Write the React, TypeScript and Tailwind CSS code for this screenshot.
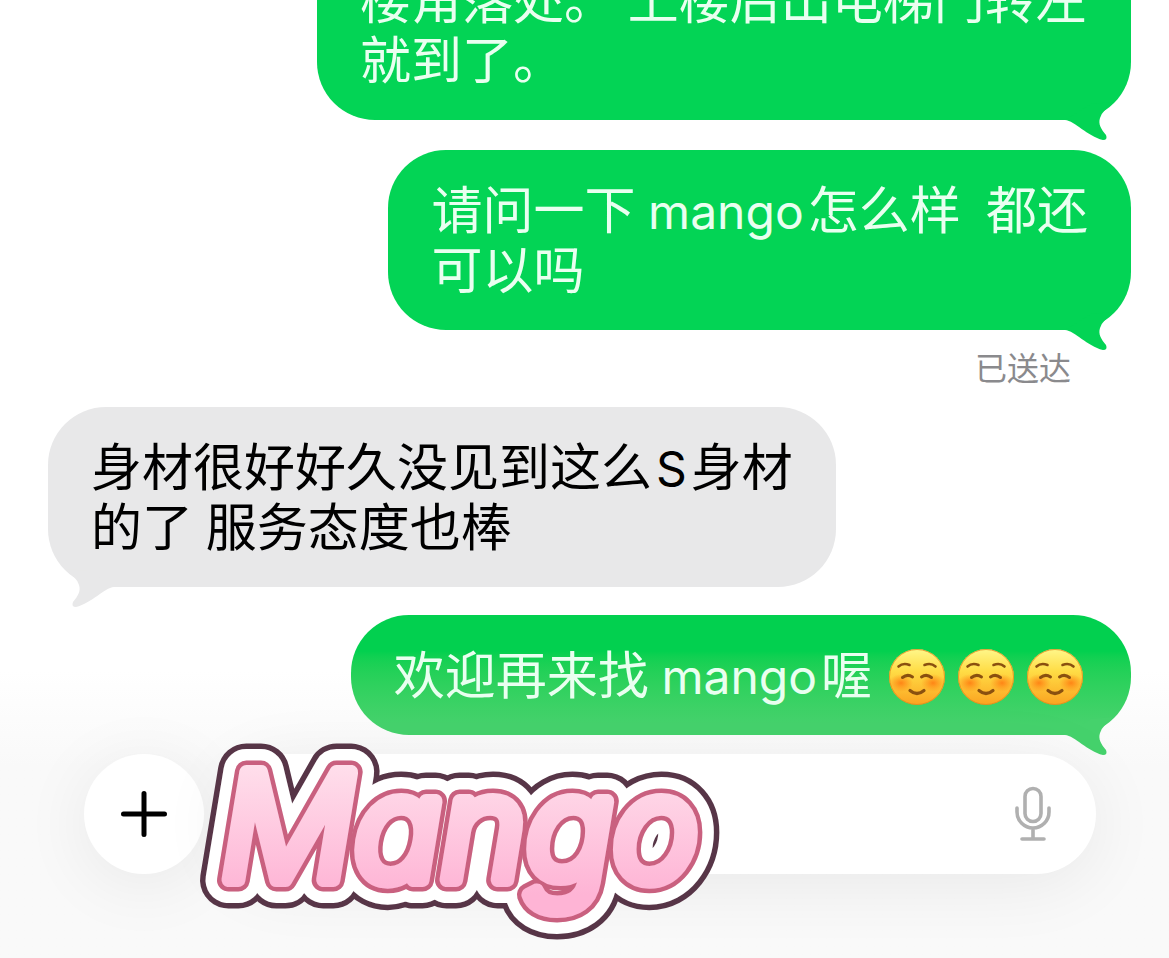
import React from "react";
import clsx from "clsx";

const BlushEmoji = () => {
  return (
    <svg
      viewBox="0 0 58 58"
      role="img"
      aria-label="☺️"
      className="h-[58px] w-[58px]"
    >
      <defs>
        <linearGradient id="face" x1="0" y1="0" x2="0" y2="1">
          <stop offset="0" stopColor="#fff78a" />
          <stop offset="0.4" stopColor="#ffdc45" />
          <stop offset="1" stopColor="#fba320" />
        </linearGradient>
        <radialGradient id="cheek">
          <stop offset="0" stopColor="#ff7d12" stopOpacity="0.9" />
          <stop offset="1" stopColor="#ff8a14" stopOpacity="0" />
        </radialGradient>
      </defs>
      <circle cx="29" cy="29" r="28" fill="url(#face)" />
      <circle
        cx="29"
        cy="29"
        r="27.5"
        fill="none"
        stroke="#e08a1c"
        strokeOpacity="0.8"
      />
      <ellipse cx="13" cy="35" rx="12" ry="9" fill="url(#cheek)" />
      <ellipse cx="45" cy="35" rx="12" ry="9" fill="url(#cheek)" />
      <g fill="none" stroke="#8a500f" strokeWidth="2.6" strokeLinecap="round">
        <path d="M10.500 18.500 Q15 14.500 21.500 17" />
        <path d="M47.500 18.500 Q43 14.500 36.500 17" />
        <path d="M14.500 29.500 Q19.500 25.500 24.500 29" strokeWidth="3" />
        <path d="M43.500 29.500 Q38.500 25.500 33.500 29" strokeWidth="3" />
        <path d="M22 42.500 Q29 48.500 36 42.500" strokeWidth="3.2" />
      </g>
    </svg>
  );
};

const Latin = ({ children }: { children: React.ReactNode }) => {
  return <span className="mr-1 font-['Inter'] text-[48px]">{children}</span>;
};

type BubbleProps = {
  from: "me" | "them";
  fading?: boolean;
  children: React.ReactNode;
};

const Bubble = ({ from, fading = false, children }: BubbleProps) => {
  const mine = from === "me";
  return (
    <li
      className={clsx(
        "relative w-fit max-w-[814px] rounded-[58px] px-[43px] pt-[32px] pb-[28px] text-[51px] leading-[60px]",
        mine ? "self-end text-[#e9fff0]" : "self-start bg-[#e8e8e9] text-black",
        mine && !fading && "bg-[#03d455]",
        fading && "bg-linear-to-b from-[#02d04f] from-30% to-[#45d26c] to-90%"
      )}
    >
      <svg
        viewBox="0 0 70 44"
        aria-hidden="true"
        className={clsx(
          "absolute -bottom-[22px] h-[44px] w-[70px]",
          mine ? "right-0" : "left-0 -scale-x-100"
        )}
      >
        <path
          d="M4 22 C14 23 26 38 42 42 Q47 42 45 37 C40 31 37 26 39 20 Q40 16 44 12 L53 4 L30 6 Z"
          fill={fading ? "#45d26c" : mine ? "#03d455" : "#e8e8e9"}
        />
      </svg>
      <div className="relative">{children}</div>
    </li>
  );
};

const MangoSticker = () => {
  return (
    <svg
      viewBox="0 0 560 240"
      className="pointer-events-none absolute -top-[24px] left-[190px] h-[240px] w-[560px]"
    >
      <defs>
        <linearGradient
          id="pink"
          gradientUnits="userSpaceOnUse"
          x1="0"
          y1="30"
          x2="0"
          y2="165"
        >
          <stop offset="0" stopColor="#ffe0ec" />
          <stop offset="1" stopColor="#feb4d5" />
        </linearGradient>
        <text
          id="mango"
          x="31"
          y="150"
          className="font-['Inter'] text-[148px] font-light italic [font-feature-settings:'cv11']"
        >
          M<tspan className="text-[144px]">ango</tspan>
        </text>
      </defs>
      <g strokeLinejoin="round" strokeLinecap="round">
        <use href="#mango" fill="#573547" stroke="#573547" strokeWidth="57" />
        {/* keeps the counters of a and g white */}
        <ellipse cx="207" cy="110" rx="12" ry="22" fill="#fff" />
        <ellipse cx="379" cy="110" rx="12" ry="22" fill="#fff" />
        <use href="#mango" fill="#fff" stroke="#fff" strokeWidth="46" />
        <use href="#mango" fill="#c9607f" stroke="#c9607f" strokeWidth="23" />
        <use href="#mango" fill="url(#pink)" stroke="url(#pink)" strokeWidth="14" />
      </g>
    </svg>
  );
};

const Composer = () => {
  return (
    <form
      className="relative mt-[19px] flex items-center gap-[18px] pr-[73px] pl-[84px]"
      onSubmit={(e) => e.preventDefault()}
    >
      <button
        type="button"
        aria-label="添加"
        className="flex h-[120px] w-[120px] shrink-0 items-center justify-center rounded-full bg-white shadow-[0_10px_70px_rgba(0,0,0,0.07)]"
      >
        <svg viewBox="0 0 46 46" className="h-[46px] w-[46px]">
          <path
            d="M23 2.500 V43.500 M2.500 23 H43.500"
            stroke="#000"
            strokeWidth="5"
            strokeLinecap="round"
          />
        </svg>
      </button>
      <div className="flex h-[120px] min-w-0 flex-1 items-center rounded-full bg-white pr-[45px] pl-10 shadow-[0_10px_70px_rgba(0,0,0,0.07)]">
        <input
          type="text"
          aria-label="信息"
          className="h-full min-w-0 flex-1 bg-transparent text-[51px] outline-none"
        />
        <button type="button" aria-label="听写">
          <svg
            viewBox="0 0 36 56"
            fill="none"
            stroke="#b0b0b0"
            strokeWidth="3.6"
            strokeLinecap="round"
            className="h-[56px] w-[36px]"
          >
            <rect x="10" y="2.500" width="16" height="33" rx="8" />
            <path d="M2 22 V26 A16 16 0 0 0 34 26 V22 M18 42.500 V53 M7 53 H29" />
          </svg>
        </button>
      </div>
      <MangoSticker />
    </form>
  );
};

const App = () => {
  return (
    <main className="flex min-h-screen flex-col overflow-hidden bg-linear-to-b from-white from-70% to-[#f9f9f9] to-80% font-['Roboto','Noto_Sans_CJK_SC',sans-serif]">
      {/* the oldest message is scrolled partly off the top */}
      <ul className="-mt-[60px] flex flex-col pr-[38px] pl-[48px]">
        <Bubble from="me">楼角落处。 上楼后出电梯门转左就到了。</Bubble>
        <li className="h-[30px]" aria-hidden="true" />
        <Bubble from="me">
          请问一下 <Latin>mango</Latin>怎么样&nbsp; 都还
          <br />
          可以吗
        </Bubble>
        <li className="mt-[19px] mb-[18px] self-end pr-[60px] text-[32px] leading-[40px] text-[#8a8a8d]">
          已送达
        </li>
        <Bubble from="them">
          身材很好好久没见到这么
          <span className="ml-1">
            <Latin>S</Latin>
          </span>
          身材
          <br />
          的了 服务态度也棒
        </Bubble>
        <li className="h-[28px]" aria-hidden="true" />
        <Bubble from="me" fading>
          <div className="flex items-center">
            <span>
              欢迎再来找 <Latin>mango</Latin>喔
            </span>
            <span className="mr-1 ml-4 flex gap-[11px]">
              <BlushEmoji />
              <BlushEmoji />
              <BlushEmoji />
            </span>
          </div>
        </Bubble>
      </ul>
      <Composer />
    </main>
  );
};

export default App;
